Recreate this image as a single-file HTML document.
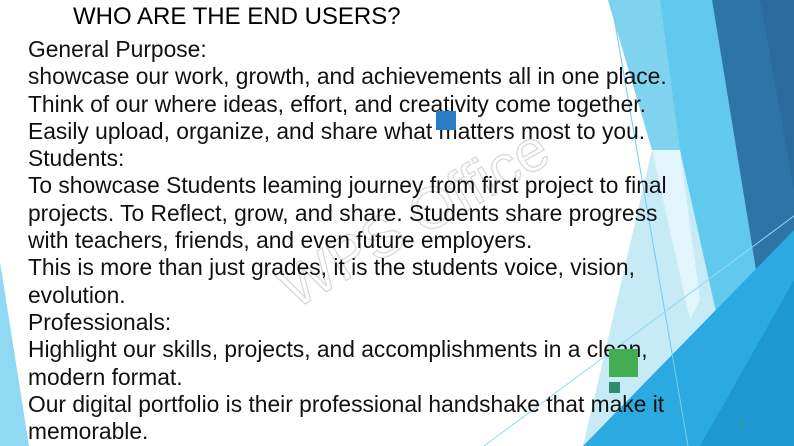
<!DOCTYPE html>
<html><head><meta charset="utf-8"><style>
html,body{margin:0;padding:0;}
body{width:794px;height:446px;overflow:hidden;position:relative;background:#fff;font-family:"Liberation Sans",sans-serif;}
svg.bg{position:absolute;left:0;top:0;}
.t{position:absolute;left:73px;top:3px;font-size:24px;color:#000;white-space:nowrap;}
.body{position:absolute;left:28px;top:36px;font-size:22.8px;line-height:27.3px;color:#111;white-space:nowrap;}
.wm{position:absolute;left:265px;top:185px;font-size:58px;color:transparent;-webkit-text-stroke:1.2px #d6d6d6;transform:rotate(-30deg);transform-origin:center;white-space:nowrap;}
.sq{position:absolute;}
</style></head><body>
<svg class="bg" width="794" height="446" viewBox="0 0 794 446">
<polygon points="0,262 0,446 29,446" fill="#8fd9f2"/>
<polygon points="608,0 712,0 740,446 583,446 652,150" fill="#c6eaf6"/>
<polygon points="608,0 712,0 735,150 652,150" fill="#7fd3ef"/>
<polygon points="652,150 680,150 700,300 690,320" fill="#e2f5fc"/>
<polygon points="660,0 712,0 760,295 720,330 680,150" fill="#62c9ee"/>
<polygon points="712,0 794,0 794,250 760,295" fill="#2f74a7"/>
<polygon points="760,0 794,0 794,190" fill="#2a6a9c"/>
<polygon points="583,446 794,230 794,446" fill="#2aaae0"/>
<polygon points="700,446 794,280 794,446" fill="#1f97d0"/>
<line x1="611" y1="0" x2="688" y2="446" stroke="#6fcdee" stroke-width="1"/>
<line x1="484" y1="446" x2="794" y2="216" stroke="#8fdaf3" stroke-width="1"/>
</svg>
<div class="t">WHO ARE THE END USERS?</div>
<div class="wm">WPS Office</div>
<div class="body">General Purpose:<br>showcase our work, growth, and achievements all in one place.<br>Think of our where ideas, effort, and creativity come together.<br>Easily upload, organize, and share what matters most to you.<br>Students:<br>To showcase Students leaming journey from first project to final<br>projects. To Reflect, grow, and share. Students share progress<br>with teachers, friends, and even future employers.<br>This is more than just grades, it is the students voice, vision,<br>evolution.<br>Professionals:<br>Highlight our skills, projects, and accomplishments in a clean,<br>modern format.<br>Our digital portfolio is their professional handshake that make it<br>memorable.</div>
<div class="sq" style="left:436px;top:111px;width:20px;height:19px;background:#2a7cc4"></div>
<div class="sq" style="left:609px;top:349px;width:29px;height:28px;background:#43ad52"></div>
<div class="sq" style="left:609px;top:382px;width:11px;height:11px;background:#2a8f6a"></div>
<div style="position:absolute;left:740px;top:419px;font-size:9px;color:#3a9a6a">6</div>
</body></html>
